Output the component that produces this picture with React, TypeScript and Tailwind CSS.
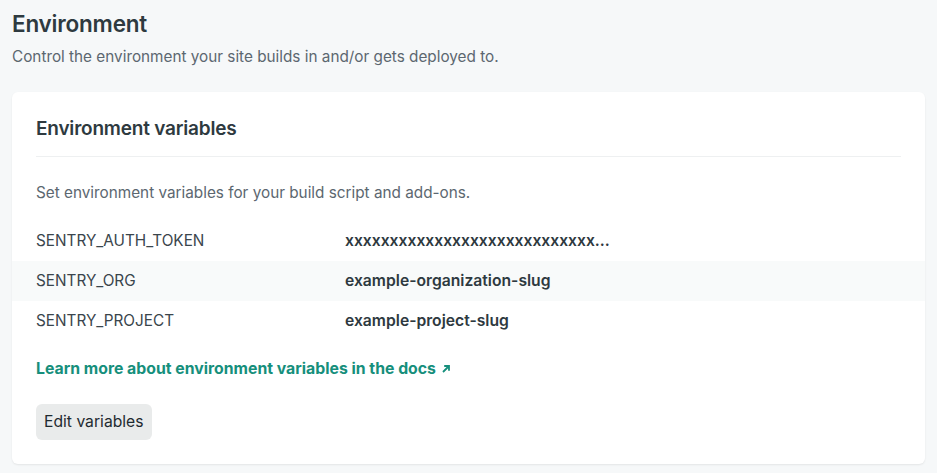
import React from "react";

const rows = [
  { k: "SENTRY_AUTH_TOKEN", v: "xxxxxxxxxxxxxxxxxxxxxxxxxxxx..." },
  { k: "SENTRY_ORG", v: "example-organization-slug" },
  { k: "SENTRY_PROJECT", v: "example-project-slug" },
];

export default function App() {
  return (
    <div
      className="min-h-[473px] w-full bg-[#f6f8f9] px-3 pt-[10px] pb-2 text-[#2e3940]"
      style={{ fontFamily: "Inter, 'Noto Sans', sans-serif" }}
    >
      <h1 className="text-[22.5px] leading-[28px] font-semibold text-[#2e3a40] tracking-[-0.2px]">Environment</h1>
      <p className="mt-[9px] text-[15.3px] leading-[20px] text-[#5c6770]">
        Control the environment your site builds in and/or gets deployed to.
      </p>
      <div className="mt-[25px] rounded-md bg-white shadow-[0_1px_2px_rgba(0,0,0,0.08)] pt-[24px] pb-[24px]">
        <div className="mx-6 border-b border-[#eef0f1] pb-[14px]">
          <h2 className="text-[19px] leading-[26px] font-semibold text-[#2e3a40] tracking-[-0.2px]">Environment variables</h2>
        </div>
        <p className="mx-6 mt-[26px] text-[15.3px] leading-[20px] text-[#5c6770]">
          Set environment variables for your build script and add-ons.
        </p>
        <div className="mt-[18px]">
          {rows.map((r, i) => (
            <div
              key={r.k}
              className={`flex h-10 items-center px-6 text-[15.3px] ${i === 1 ? "bg-[#f8fafa]" : ""}`}
            >
              <div className="w-[309px] text-[#3a454c]">{r.k}</div>
              <div className="text-[15.7px] font-semibold text-[#2e3940]">{r.v}</div>
            </div>
          ))}
        </div>
        <a
          href="#"
          className="mx-6 mt-[18px] flex items-center gap-[5px] text-[15.8px] leading-[20px] font-bold text-[#168f7c]"
        >
          Learn more about environment variables in the docs
          <svg width="10" height="10" viewBox="0 0 10 10" fill="none" stroke="currentColor" strokeWidth="1.8">
            <path d="M2 8 L8 2 M3.2 2 H8 V6.8" />
          </svg>
        </a>
        <button className="mx-6 mt-[25px] h-9 rounded-md bg-[#e9ebeb] px-2 text-[15.7px] text-[#1e2a30]">
          Edit variables
        </button>
      </div>
    </div>
  );
}
